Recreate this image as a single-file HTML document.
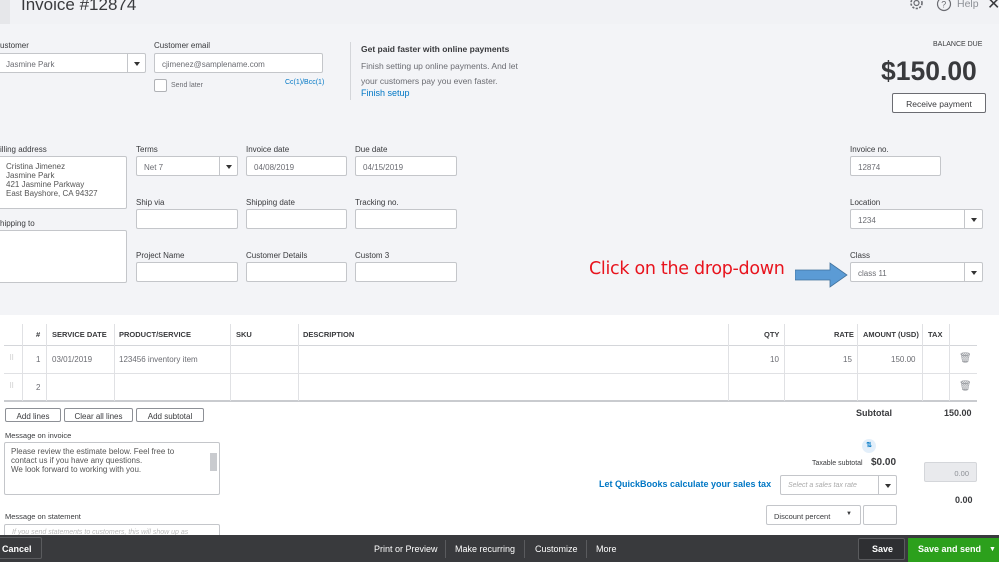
<!DOCTYPE html>
<html><head><meta charset="utf-8"><style>
*{box-sizing:border-box;margin:0;padding:0}
body{width:999px;height:562px;overflow:hidden;position:relative;background:#fff;font-family:"Liberation Sans",sans-serif;color:#393a3d}
.a{position:absolute}
.top{position:absolute;left:0;top:0;width:999px;height:315px;background:#f3f4f7}
.hdr{position:absolute;left:0;top:0;width:999px;height:24px;background:#f1f2f5}
.lbl{position:absolute;font-size:8px;color:#393a3d}
.inp{position:absolute;background:#fff;border:1px solid #c4c6ca;border-radius:2px;font-size:8px;color:#6b6c72;padding:6px 0 0 7px}
.dd{position:absolute;right:0;top:0;bottom:0;width:18px;border-left:1px solid #c4c6ca}
.dd:after{content:"";position:absolute;left:6px;top:8px;border:3px solid transparent;border-top:4px solid #333}
.th{position:absolute;font-size:7.5px;font-weight:bold;color:#393a3d}
.td{position:absolute;font-size:8px;color:#6b6c72}
.vl{position:absolute;width:1px;background:#e0e1e4}
.btn{position:absolute;border:1px solid #8d9096;border-radius:2px;background:#fff;font-size:8px;text-align:center;padding-top:3px;color:#393a3d}
.foot{position:absolute;left:0;top:535px;width:999px;height:27px;background:#393a3d;color:#fff;font-size:9px}
.fi{position:absolute;top:9px}
</style></head><body>
<div class="top"></div>
<div class="hdr"></div>
<div class="a" style="left:21px;top:-5px;font-size:17px;color:#393a3d">Invoice #12874</div>
<div class="a" style="left:0;top:0;width:10px;height:24px;background:#e6e7ea"></div>
<svg class="a" style="left:908px;top:-3px" width="17" height="15" viewBox="0 0 17 15"><circle cx="8.5" cy="6" r="2.5" fill="none" stroke="#6b6c72" stroke-width="1.2"/><circle cx="8.5" cy="6" r="5.5" fill="none" stroke="#6b6c72" stroke-width="1.6" stroke-dasharray="2.2 1.4"/></svg>
<svg class="a" style="left:936px;top:-4px" width="16" height="16"><circle cx="8" cy="8" r="6.5" fill="none" stroke="#6b6c72" stroke-width="1.2"/><text x="5.2" y="11.5" font-size="9" fill="#6b6c72" font-family="Liberation Sans">?</text></svg>
<div class="a" style="left:957px;top:-2px;font-size:10.5px;color:#8d9096">Help</div>
<div class="a" style="left:987px;top:-6px;font-size:16px;color:#393a3d">✕</div>

<div class="lbl" style="left:0;top:41px">ustomer</div>
<div class="inp" style="left:-2px;top:53px;width:148px;height:20px">Jasmine Park<div class="dd"></div></div>
<div class="lbl" style="left:154px;top:41px">Customer email</div>
<div class="inp" style="left:154px;top:53px;width:169px;height:20px">cjimenez@samplename.com</div>
<div class="a" style="left:154px;top:79px;width:13px;height:13px;border:1px solid #b0b2b6;background:#fff;border-radius:2px"></div>
<div class="lbl" style="left:171px;top:82px;font-size:7px;color:#6b6c72">Send later</div>
<div class="lbl" style="left:285px;top:79px;font-size:7px;color:#0077c5">Cc(1)/Bcc(1)</div>
<div class="a" style="left:350px;top:42px;width:1px;height:58px;background:#d4d6da"></div>
<div class="a" style="left:361px;top:44px;font-size:8.5px;font-weight:bold;color:#393a3d">Get paid faster with online payments</div>
<div class="a" style="left:361px;top:59px;font-size:8.5px;line-height:15px;color:#6b6c72">Finish setting up online payments. And let<br>your customers pay you even faster.</div>
<div class="a" style="left:361px;top:88px;font-size:9px;color:#0077c5">Finish setup</div>

<div class="lbl" style="left:933px;top:41px;font-size:7px">BALANCE DUE</div>
<div class="a" style="left:881px;top:56px;font-size:26.5px;font-weight:bold;color:#393a3d">$150.00</div>
<div class="btn" style="left:892px;top:93px;width:94px;height:20px;border-color:#6b6c72;padding-top:5px;font-size:8.5px">Receive payment</div>

<div class="lbl" style="left:0;top:145px">illing address</div>
<div class="inp" style="left:-2px;top:156px;width:129px;height:53px;line-height:9px;padding-top:5px;color:#555">Cristina Jimenez<br>Jasmine Park<br>421 Jasmine Parkway<br>East Bayshore, CA  94327</div>
<div class="lbl" style="left:0;top:219px">hipping to</div>
<div class="inp" style="left:-2px;top:230px;width:129px;height:53px"></div>

<div class="lbl" style="left:136px;top:145px">Terms</div>
<div class="inp" style="left:136px;top:156px;width:102px;height:20px">Net 7<div class="dd"></div></div>
<div class="lbl" style="left:246px;top:145px">Invoice date</div>
<div class="inp" style="left:246px;top:156px;width:101px;height:20px">04/08/2019</div>
<div class="lbl" style="left:355px;top:145px">Due date</div>
<div class="inp" style="left:355px;top:156px;width:102px;height:20px">04/15/2019</div>
<div class="lbl" style="left:136px;top:198px">Ship via</div>
<div class="inp" style="left:136px;top:209px;width:102px;height:20px"></div>
<div class="lbl" style="left:246px;top:198px">Shipping date</div>
<div class="inp" style="left:246px;top:209px;width:101px;height:20px"></div>
<div class="lbl" style="left:355px;top:198px">Tracking no.</div>
<div class="inp" style="left:355px;top:209px;width:102px;height:20px"></div>
<div class="lbl" style="left:136px;top:251px">Project Name</div>
<div class="inp" style="left:136px;top:262px;width:102px;height:20px"></div>
<div class="lbl" style="left:246px;top:251px">Customer Details</div>
<div class="inp" style="left:246px;top:262px;width:101px;height:20px"></div>
<div class="lbl" style="left:355px;top:251px">Custom 3</div>
<div class="inp" style="left:355px;top:262px;width:102px;height:20px"></div>

<div class="lbl" style="left:850px;top:145px">Invoice no.</div>
<div class="inp" style="left:850px;top:156px;width:91px;height:20px">12874</div>
<div class="lbl" style="left:850px;top:198px">Location</div>
<div class="inp" style="left:850px;top:209px;width:133px;height:20px">1234<div class="dd"></div></div>
<div class="lbl" style="left:850px;top:251px">Class</div>
<div class="inp" style="left:850px;top:262px;width:133px;height:20px">class 11<div class="dd"></div></div>
<div class="a" style="left:589px;top:259px;font-size:17.5px;color:#e8141e;font-family:'DejaVu Sans',sans-serif;letter-spacing:-0.3px">Click on the drop-down</div>
<svg class="a" style="left:795px;top:262px" width="54" height="26"><polygon points="0,8 35,8 35,1 52,13 35,25 35,18 0,18" fill="#5b9bd5" stroke="#41719c" stroke-width="0.8"/></svg>

<div class="a" style="left:4px;top:345px;width:973px;height:1px;background:#d4d6da"></div>
<div class="a" style="left:4px;top:373px;width:973px;height:1px;background:#e0e1e4"></div>
<div class="a" style="left:4px;top:400px;width:973px;height:2px;background:#c9cbcf"></div>
<div class="vl" style="left:22px;top:324px;height:77px"></div>
<div class="vl" style="left:46px;top:324px;height:77px"></div>
<div class="vl" style="left:114px;top:324px;height:77px"></div>
<div class="vl" style="left:230px;top:324px;height:77px"></div>
<div class="vl" style="left:298px;top:324px;height:77px"></div>
<div class="vl" style="left:728px;top:324px;height:77px"></div>
<div class="vl" style="left:784px;top:324px;height:77px"></div>
<div class="vl" style="left:857px;top:324px;height:77px"></div>
<div class="vl" style="left:922px;top:324px;height:77px"></div>
<div class="vl" style="left:949px;top:324px;height:77px"></div>
<div class="th" style="left:36px;top:330px">#</div>
<div class="th" style="left:52px;top:330px">SERVICE DATE</div>
<div class="th" style="left:119px;top:330px">PRODUCT/SERVICE</div>
<div class="th" style="left:236px;top:330px">SKU</div>
<div class="th" style="left:303px;top:330px">DESCRIPTION</div>
<div class="th" style="left:764px;top:330px">QTY</div>
<div class="th" style="left:834px;top:330px">RATE</div>
<div class="th" style="left:863px;top:330px">AMOUNT (USD)</div>
<div class="th" style="left:928px;top:330px">TAX</div>
<div class="td" style="left:9px;top:354px;color:#bbb;font-size:7px">⠿</div>
<div class="td" style="left:36px;top:355px">1</div>
<div class="td" style="left:52px;top:355px">03/01/2019</div>
<div class="td" style="left:119px;top:355px">123456 inventory item</div>
<div class="td" style="left:770px;top:355px">10</div>
<div class="td" style="left:843px;top:355px">15</div>
<div class="td" style="left:891px;top:355px">150.00</div>
<div class="td" style="left:959px;top:353px;font-size:10px;color:#8d9096">🗑</div>
<div class="td" style="left:9px;top:382px;color:#bbb;font-size:7px">⠿</div>
<div class="td" style="left:36px;top:383px">2</div>
<div class="td" style="left:959px;top:381px;font-size:10px;color:#8d9096">🗑</div>

<div class="btn" style="left:5px;top:408px;width:56px;height:14px">Add lines</div>
<div class="btn" style="left:64px;top:408px;width:69px;height:14px">Clear all lines</div>
<div class="btn" style="left:136px;top:408px;width:68px;height:14px">Add subtotal</div>
<div class="lbl" style="left:5px;top:431px;font-size:7.5px">Message on invoice</div>
<div class="inp" style="left:4px;top:442px;width:216px;height:53px;line-height:9px;padding:4px 6px;color:#555">Please review the estimate below.  Feel free to<br>contact us if you have any questions.<br>We look forward to working with you.</div>
<div class="a" style="left:210px;top:453px;width:7px;height:18px;background:#c9cbcf"></div>
<div class="lbl" style="left:5px;top:512px;font-size:7.5px">Message on statement</div>
<div class="inp" style="left:4px;top:524px;width:216px;height:20px;color:#bbb;font-style:italic;font-size:7px;padding-top:4px">If you send statements to customers, this will show up as</div>

<div class="a" style="left:856px;top:408px;font-size:9px;font-weight:bold">Subtotal</div>
<div class="a" style="left:944px;top:408px;font-size:9px;font-weight:bold">150.00</div>
<div class="a" style="left:862px;top:439px;width:14px;height:14px;border-radius:7px;background:#e3effa;font-size:7px;color:#0077c5;text-align:center;line-height:14px;font-weight:bold">⇅</div>
<div class="a" style="left:812px;top:460px;font-size:7px">Taxable subtotal</div>
<div class="a" style="left:871px;top:457px;font-size:10px;font-weight:bold">$0.00</div>
<div class="a" style="left:924px;top:462px;width:53px;height:20px;background:#e9eaed;border:1px solid #d4d6da;border-radius:2px;font-size:7.5px;color:#8d9096;text-align:right;padding:6px 7px 0 0">0.00</div>
<div class="a" style="left:599px;top:479px;font-size:9px;font-weight:bold;color:#0077c5">Let QuickBooks calculate your sales tax</div>
<div class="inp" style="left:780px;top:475px;width:117px;height:20px;font-style:italic;color:#aaa;font-size:7px">Select a sales tax rate<div class="dd"></div></div>
<div class="a" style="left:955px;top:495px;font-size:9px;font-weight:bold">0.00</div>
<div class="inp" style="left:766px;top:505px;width:95px;height:20px;color:#393a3d;font-size:7.5px">Discount percent<span style="position:absolute;right:8px;top:5px;font-size:6px">▼</span></div>
<div class="inp" style="left:863px;top:505px;width:34px;height:20px"></div>

<div class="foot">
<div class="a" style="left:-2px;top:2px;width:44px;height:22px;border:1px solid #5a5b5e;border-radius:2px"></div>
<div class="fi" style="left:2px;font-weight:bold">Cancel</div>
<div class="fi" style="left:374px">Print or Preview</div>
<div class="a" style="left:445px;top:5px;width:1px;height:18px;background:#5a5b5e"></div>
<div class="fi" style="left:455px">Make recurring</div>
<div class="a" style="left:524px;top:5px;width:1px;height:18px;background:#5a5b5e"></div>
<div class="fi" style="left:535px">Customize</div>
<div class="a" style="left:586px;top:5px;width:1px;height:18px;background:#5a5b5e"></div>
<div class="fi" style="left:596px">More</div>
<div class="a" style="left:858px;top:3px;width:47px;height:22px;border:1px solid #5a5b5e;border-radius:2px;background:#2e2f32"></div>
<div class="fi" style="left:872px;font-weight:bold">Save</div>
<div class="a" style="left:908px;top:3px;width:91px;height:24px;background:#2ca01c"></div>
<div class="fi" style="left:918px;font-weight:bold">Save and send</div>
<div class="fi" style="left:989px;font-size:7px;top:11px">▼</div>
</div>
</body></html>
